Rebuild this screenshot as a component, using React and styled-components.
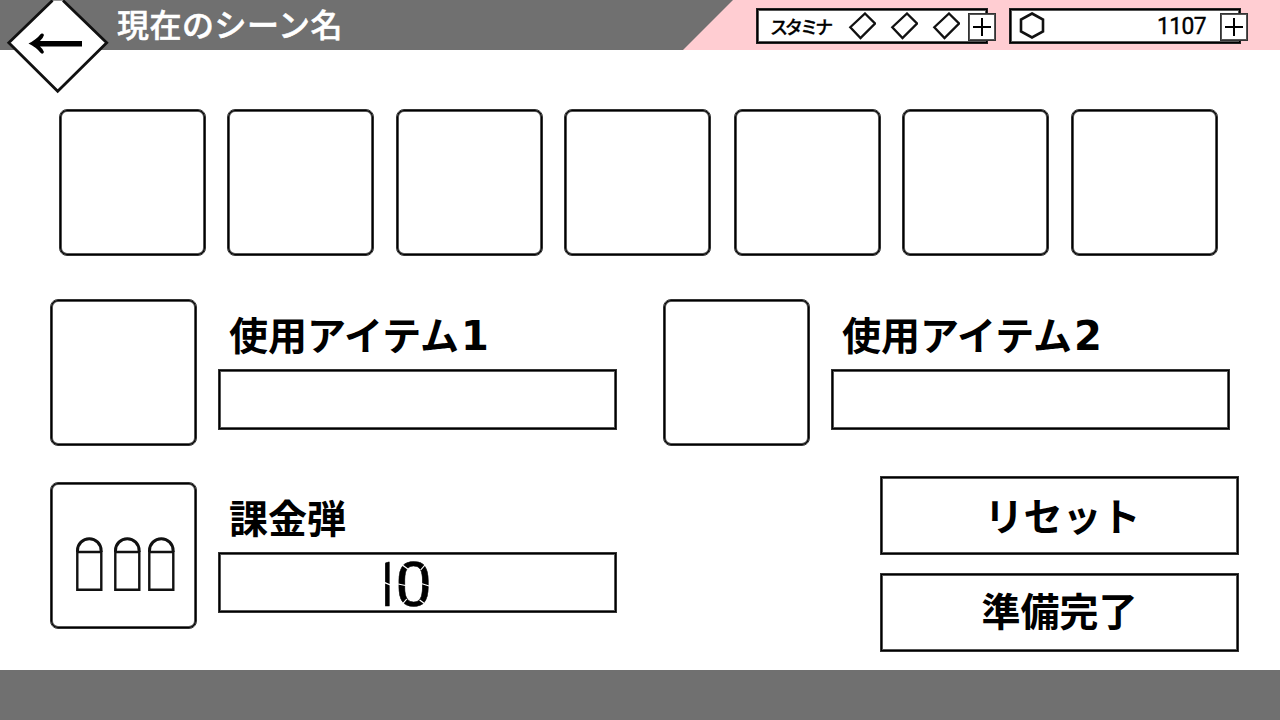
import React from "react";
import styled, { createGlobalStyle, css } from "styled-components";

const GlobalStyle = createGlobalStyle`
  * { box-sizing: border-box; }
  body { margin: 0; background: #fff; }
`;

const cjk = `"Noto Sans CJK JP", sans-serif`;

const softLine = css`
  border: 1px solid #333;
  box-shadow: inset 0 0 0 1px #000, inset 0 0 0 2px #555;
`;

const Screen = styled.div`
  width: 1280px;
  height: 720px;
  display: flex;
  flex-direction: column;
  background: #fff;
  color: #000;
  font-family: ${cjk};
  overflow: hidden;
`;

const Header = styled.header`
  position: relative;
  flex: none;
  height: 50px;
  display: flex;
  justify-content: space-between;
  background: #707070;
`;

const BackButton = styled.button`
  position: absolute;
  left: 0;
  top: 0;
  width: 116px;
  height: 100px;
  padding: 0;
  border: 0;
  background: none;
  svg { display: block; }
`;

const Title = styled.h1`
  margin: 0;
  padding-left: 117px;
  color: #fff;
  font-size: 32px;
  font-weight: 500;
  line-height: 46px;
  letter-spacing: 0.5px;
  -webkit-text-stroke: 0.5px #fff;
  white-space: nowrap;
`;

const Status = styled.div`
  width: 597px;
  display: flex;
  align-items: flex-start;
  gap: 21px;
  padding: 8px 0 0 73px;
  background: #ffcdd2;
  clip-path: polygon(50px 0, 100% 0, 100% 100%, 0 100%);
`;

const Gauge = styled.div`
  position: relative;
  width: 232px;
  height: 36px;
  display: flex;
  align-items: center;
  padding-left: ${(p) => p.$pad}px;
  background: #fff;
  border: 1px solid #222;
  box-shadow: inset 0 0 0 1px #000, inset 0 0 0 2px #555;
`;

const GaugeLabel = styled.span`
  width: 79px;
  font-size: 18px;
  font-weight: 500;
  line-height: 34px;
  letter-spacing: -2.9px;
  -webkit-text-stroke: 0.3px #000;
  white-space: nowrap;
`;

const Amount = styled.span`
  width: 161px;
  text-align: right;
  font-family: Roboto, sans-serif;
  font-size: 24px;
  font-weight: 400;
  line-height: 34px;
  letter-spacing: -0.6px;
  -webkit-text-stroke: 0.4px #000;
  transform: scaleX(0.95);
  transform-origin: right;
`;

const Gems = styled.div`
  display: flex;
  gap: 14px;
  margin-left: -1px;
`;

const PlusButton = styled.button`
  position: absolute;
  right: ${(p) => p.$right}px;
  top: 4px;
  width: 28px;
  height: 28px;
  padding: 0;
  background: #fff;
  border: 1px solid #333;
  box-shadow: inset 0 0 0 1px #555;
  svg { display: block; }
`;

const Main = styled.main`
  flex: 1;
  display: flex;
  flex-direction: column;
`;

const SlotRow = styled.div`
  display: grid;
  grid-template-columns: 168px 169px 168px 170px 168px 169px 147px;
  padding: 59px 0 0 59px;
`;

const Slot = styled.div`
  flex: none;
  width: 147px;
  height: 147px;
  padding: 3px 2px 0;
  border-radius: 8px;
  ${softLine}
`;

const Items = styled.div`
  display: flex;
  gap: 46px;
  padding: 43px 0 0 50px;
`;

const LowerRow = styled.div`
  display: flex;
  justify-content: space-between;
  padding: 30px 41px 0 50px;
`;

const Item = styled.section`
  display: flex;
  gap: 21px;
  width: 567px;
  padding-top: ${(p) => p.$top || 0}px;
`;

const ItemBody = styled.div`
  display: flex;
  flex-direction: column;
`;

const ItemName = styled.h2`
  margin: 0;
  height: 70px;
  padding-left: 11px;
  font-size: 39px;
  font-weight: 700;
  line-height: 69px;
  white-space: nowrap;
`;

const ItemNumber = styled.span`
  margin-left: 2px;
  font-family: "DejaVu Sans", sans-serif;
  font-size: 40px;
  line-height: 1;
`;

const Field = styled.div`
  width: 399px;
  height: 61px;
  display: flex;
  align-items: center;
  justify-content: center;
  ${softLine}
`;

const Counter = styled.span`
  position: relative;
  display: block;
  flex: none;
  margin: 5px 45px 0 0;
  font-family: Roboto, sans-serif;
  font-weight: 400;
  font-size: 61px;
  line-height: 56px;
  letter-spacing: -7px;
  -webkit-text-stroke: 0.5px #000;
  clip-path: inset(0 -12px 0 17.8px);
  transform: scaleX(1.07);
  svg {
    position: absolute;
    left: 0;
    top: 0;
  }
`;

const Actions = styled.div`
  display: flex;
  flex-direction: column;
  gap: 18px;
`;

const ActionButton = styled.button`
  width: 359px;
  height: 79px;
  padding: 0 0 ${(p) => p.$lift}px ${(p) => p.$shift || 0}px;
  background: #fff;
  color: #000;
  font-family: ${cjk};
  font-size: 39px;
  font-weight: 700;
  line-height: 68px;
  ${softLine}
`;

const Footer = styled.footer`
  flex: none;
  height: 50px;
  background: #707070;
`;

const Plus = ({ right }) => (
  <PlusButton $right={right} aria-label="+">
    <svg width="26" height="26" viewBox="0 0 26 26" stroke="#000" strokeWidth="2">
      <path d="M4 13H22M13 4V22" />
    </svg>
  </PlusButton>
);

const Gem = () => (
  <svg width="28" height="28" viewBox="0 0 28 28" fill="#fff" stroke="#111" strokeWidth="2.3">
    <path d="M17 1.5L27 11.5L12.5 26L2.3 15.2Z" />
  </svg>
);

const Bullets = () => (
  <svg width="141" height="141" viewBox="53 486 141 141" fill="none" stroke="#111" strokeWidth="2.4">
    {[77.3, 115.3, 149.3].map((x) => (
      <g key={x}>
        <path d={`M${x} 552V589.7H${x + 24}V552Z`} />
        <path d={`M${x + 0.2} 552V550.5A11.8 11.8 0 0 1 ${x + 23.8} 550.5V552`} strokeWidth="3" />
      </g>
    ))}
  </svg>
);

const SegmentGaps = () => (
  <svg width="62" height="56" viewBox="0 0 62 56" fill="none" stroke="#fff" strokeWidth="1.2">
    <path d="M16 25L25 29M30 27L39 29M59 29L50 26M30 5L39 12M59 3L51 13M30 52L38 42M59 50L50 43" />
  </svg>
);

const ItemPanel = ({ name, number, icon, value, top }) => (
  <Item $top={top}>
    <Slot>{icon}</Slot>
    <ItemBody>
      <ItemName>{name}{number && <ItemNumber>{number}</ItemNumber>}</ItemName>
      <Field>{value && <Counter>{value}<SegmentGaps /></Counter>}</Field>
    </ItemBody>
  </Item>
);

export default function App() {
  return (
    <>
      <GlobalStyle />
      <Screen>
        <Header>
          <Title>現在のシーン名</Title>
          <Status>
            <Gauge $pad={13}>
              <GaugeLabel>スタミナ</GaugeLabel>
              <Gems><Gem /><Gem /><Gem /></Gems>
              <Plus right={-9} />
            </Gauge>
            <Gauge $pad={9}>
              <svg width="26" height="28" viewBox="0 0 26 28" fill="none" stroke="#111" strokeWidth="2.6">
                <path d="M13 1.5L24 7.5V19.5L13 25.5L2 19.5V7.5Z" />
              </svg>
              <Amount>1107</Amount>
              <Plus right={-8} />
            </Gauge>
          </Status>
          <BackButton aria-label="back">
            <svg width="116" height="100" viewBox="0 0 116 100">
              <path d="M54 0L8.5 42.5L57.7 91.5L107 42.5L62 0Z" fill="#fff" />
              <path d="M52.5 0.5L8.8 42.7L57.7 91.2L106.7 42.7L63 0.5" fill="none" stroke="#111" strokeWidth="2.8" />
              <path d="M53 0H63" stroke="#777" strokeWidth="1.5" />
              <path d="M28.5 43.5Q36 40 41 33.8Q43 33 44 35Q43 38.5 40 41H82V46.5H40Q43 49 44 52Q43 54.5 41 53.3Q36 47 28.5 43.5Z" fill="#000" />
            </svg>
          </BackButton>
        </Header>
        <Main>
          <SlotRow>
            {Array.from({ length: 7 }, (_, i) => <Slot key={i} />)}
          </SlotRow>
          <Items>
            <ItemPanel name="使用アイテム" number="1" />
            <ItemPanel name="使用アイテム" number="2" />
          </Items>
          <LowerRow>
            <ItemPanel name="課金弾" icon={<Bullets />} value="10" top={6} />
            <Actions>
              <ActionButton $shift={6} $lift={3}>リセット</ActionButton>
              <ActionButton $lift={7}>準備完了</ActionButton>
            </Actions>
          </LowerRow>
        </Main>
        <Footer />
      </Screen>
    </>
  );
}
